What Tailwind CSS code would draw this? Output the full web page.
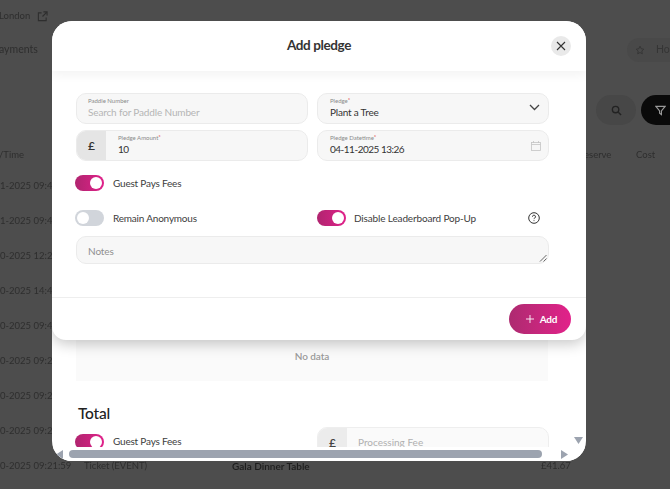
<!DOCTYPE html>
<html>
<head>
<meta charset="utf-8">
<script src="https://cdn.jsdelivr.net/npm/@tailwindcss/browser@4"></script>
</head>
<body class="m-0">
<div class="relative w-[670px] h-[489px] overflow-hidden bg-[#4d4d4d] font-['Lato','Noto_Sans',sans-serif]">
  <!-- dimmed page behind -->
  <div class="blur-[0.7px] text-[9.500px] text-[#2e2e2e] w-[670px] h-[489px]">
    <div class="flex items-center gap-[7px] h-[32px]">
      <span class="-ml-[1px]">London</span>
      <svg class="w-[11px] h-[11px]" viewBox="0 0 12 12" fill="none" stroke="#2e2e2e" stroke-width="1.2"><path d="M5 2H1.500v8.500H10V7M7 1h4v4M11 1 6 6"/></svg>
    </div>
    <div class="flex items-center justify-between h-[36px]">
      <span class="-ml-[1px] text-[10.500px]">ayments</span>
      <div class="flex items-center gap-[11px] w-[43px] h-[24px] pl-[8px] rounded-l-full bg-[#494949] text-[#353535] overflow-hidden">
        <svg class="w-[10px] h-[10px] shrink-0" viewBox="0 0 24 24" fill="none" stroke="#333" stroke-width="2"><path d="m12 3 3 6 6 1-4.500 4.500 1 6.500-5.500-3-5.500 3 1-6.500L3 10l6-1z"/></svg>
        <span class="text-[10.500px]">Hom</span>
      </div>
    </div>
    <div class="flex justify-end gap-[5px] h-[59px] pt-[27px]">
      <div class="w-[40px] h-[30px] rounded-full bg-[#474747] flex items-center justify-center">
        <svg class="w-[11px] h-[11px]" viewBox="0 0 24 24" fill="none" stroke="#222" stroke-width="3"><circle cx="10" cy="10" r="7"/><path d="m16 16 6 6"/></svg>
      </div>
      <div class="w-[29px] h-[30px] rounded-l-full bg-[#0a0a0a] flex items-center pl-[14px]">
        <svg class="w-[11px] h-[11px]" viewBox="0 0 24 24" fill="none" stroke="#999" stroke-width="2.500"><path d="M2 3h20l-8 10v8l-4-3v-5z"/></svg>
      </div>
    </div>
    <div class="flex items-center h-[27px] mt-[15px]">
      <span class="w-[585px] -ml-[1px]">/Time</span><span class="w-[52px]">eserve</span><span>Cost</span>
    </div>
    <div class="flex flex-col">
      <div class="h-[35px] flex items-center">1-2025 09:49</div>
      <div class="h-[35px] flex items-center">1-2025 09:49</div>
      <div class="h-[35px] flex items-center">0-2025 12:26</div>
      <div class="h-[35px] flex items-center">0-2025 14:46</div>
      <div class="h-[35px] flex items-center">0-2025 09:41</div>
      <div class="h-[35px] flex items-center">0-2025 09:23</div>
      <div class="h-[35px] flex items-center">0-2025 09:22</div>
      <div class="h-[35px] flex items-center">0-2025 09:22</div>
      <div class="h-[35px] flex items-center">
        <span class="w-[84px]">0-2025 09:21:59</span><span class="w-[148px]">Ticket (EVENT)</span><span class="w-[309px] text-[10px] text-[#1c1c1c] font-semibold">Gala Dinner Table</span><span>£41.67</span>
      </div>
    </div>
  </div>

  <!-- modal -->
  <div class="absolute left-[52px] top-[21px] w-[534px] h-[440px] bg-white rounded-[20px] overflow-hidden">
    <div class="relative z-10 h-[319px] bg-white rounded-b-[14px] shadow-[0_4px_14px_rgba(0,0,0,0.22)] flex flex-col">
      <div class="h-[50px] shrink-0 relative flex items-center justify-center shadow-[0_4px_10px_rgba(0,0,0,0.05)]">
        <h2 class="text-[13.500px] tracking-[-0.4px] -mt-[1px] font-bold text-[#333333]">Add pledge</h2>
        <button class="absolute right-[15px] top-[15px] w-[20px] h-[20px] rounded-full bg-[#e9e9e9] flex items-center justify-center">
          <svg class="w-[10px] h-[10px]" viewBox="0 0 10 10" fill="none" stroke="#333" stroke-width="1.100"><path d="m1 1 8 8M9 1l-8 8"/></svg>
        </button>
      </div>
      <div class="h-[226px] shrink-0 pt-[22px] pl-[24px] flex flex-col">
        <div class="grid grid-cols-[232px_232px] gap-x-[9px] gap-y-[6px]">
          <div class="h-[31px] rounded-[10px] border border-[#ebebeb] bg-[#f7f7f7] pl-[11px] flex flex-col">
            <span class="text-[6px] leading-[7px] mt-[3px] text-[#8a8a8a]">Paddle Number</span>
            <span class="text-[10px] tracking-[-0.15px] leading-[12px] mt-[2px] text-[#b5b5b5]">Search for Paddle Number</span>
          </div>
          <div class="relative h-[31px] rounded-[10px] border border-[#ebebeb] bg-[#f7f7f7] pl-[12px] flex flex-col">
            <span class="text-[6px] leading-[7px] mt-[3px] text-[#8a8a8a]">Pledge<sup class="text-[#e02424] text-[6px] top-[-1px]">*</sup></span>
            <span class="text-[10px] tracking-[-0.2px] leading-[12px] mt-[2px] text-[#333]">Plant a Tree</span>
            <svg class="absolute right-[8px] top-[10px] w-[11px] h-[7px]" viewBox="0 0 11 7" fill="none" stroke="#444" stroke-width="1.300"><path d="m1 1 4.500 4.500L10 1"/></svg>
          </div>
          <div class="h-[31px] rounded-[10px] border border-[#ebebeb] bg-[#f7f7f7] overflow-hidden flex">
            <div class="w-[29px] bg-[#e5e5e5] flex items-center justify-center text-[12px] font-semibold text-[#333]">£</div>
            <div class="pl-[12px] flex flex-col">
              <span class="text-[6px] leading-[7px] mt-[3px] text-[#8a8a8a]">Pledge Amount<sup class="text-[#e02424] text-[6px] top-[-1px]">*</sup></span>
              <span class="text-[10px] tracking-[-0.5px] leading-[12px] mt-[2px] text-[#333]">10</span>
            </div>
          </div>
          <div class="relative h-[31px] rounded-[10px] border border-[#ebebeb] bg-[#f7f7f7] pl-[12px] flex flex-col">
            <span class="text-[6px] leading-[7px] mt-[3px] text-[#8a8a8a]">Pledge Datetime<sup class="text-[#e02424] text-[6px] top-[-1px]">*</sup></span>
            <span class="text-[10px] tracking-[-0.5px] leading-[12px] mt-[2px] text-[#333]">04-11-2025 13:26</span>
            <svg class="absolute right-[7px] top-[10px] w-[10px] h-[10px]" viewBox="0 0 10 10" fill="none" stroke="#c4c4c4" stroke-width="0.800"><rect x="0.500" y="1.500" width="9" height="8"/><path d="M0.500 3.500h9M2.500 0v2M7.500 0v2"/></svg>
          </div>
        </div>
        <div class="flex items-center gap-[9px] mt-[13px] h-[18px] -ml-[1px]">
          <span class="w-[29px] h-[16px] rounded-full bg-linear-to-r from-[#b0246f] to-[#e0218a] relative"><span class="absolute right-[2px] top-[2px] w-[12px] h-[12px] rounded-full bg-white"></span></span>
          <span class="text-[10px] tracking-[-0.2px] text-[#3d3d3d]">Guest Pays Fees</span>
        </div>
        <div class="grid grid-cols-[232px_232px] gap-x-[9px] mt-[17px] h-[18px]">
          <div class="flex items-center gap-[9px] -ml-[1px]">
            <span class="w-[29px] h-[16px] rounded-full bg-[#d1d5db] relative"><span class="absolute left-[2px] top-[2px] w-[12px] h-[12px] rounded-full bg-white"></span></span>
            <span class="text-[10px] tracking-[-0.2px] text-[#3d3d3d]">Remain Anonymous</span>
          </div>
          <div class="flex items-center gap-[8px]">
            <span class="w-[29px] h-[16px] rounded-full bg-linear-to-r from-[#b0246f] to-[#e0218a] relative"><span class="absolute right-[2px] top-[2px] w-[12px] h-[12px] rounded-full bg-white"></span></span>
            <span class="text-[10px] tracking-[-0.15px] text-[#3d3d3d]">Disable Leaderboard Pop-Up</span>
            <svg class="ml-auto mr-[9px] w-[12px] h-[12px]" viewBox="0 0 12 12" fill="none" stroke="#333" stroke-width="1"><circle cx="6" cy="6" r="5.300"/><path d="M4.500 4.700a1.500 1.500 0 1 1 2.200 1.300c-.5.300-.7.600-.7 1.100"/><path d="M6 8.300v.8"/></svg>
          </div>
        </div>
        <div class="relative mt-[9px] h-[28px] w-[473px] rounded-[10px] border border-[#ebebeb] bg-[#f7f7f7] pl-[11px] pt-[3px] flex items-center text-[10px] tracking-[-0.1px] text-[#8f8f8f]">
          Notes
          <svg class="absolute right-[1px] bottom-[1px] w-[8px] h-[8px]" viewBox="0 0 8 8" fill="none" stroke="#444" stroke-width="0.800"><path d="M1 7.500 7.500 1M4.500 7.500l3-3"/></svg>
        </div>
      </div>
      <div class="flex-1 border-t border-[#eeeeee] flex items-start justify-end pt-[6px] pr-[15px]">
        <button class="w-[62px] h-[30px] rounded-full bg-linear-to-r from-[#ad2a70] to-[#e2218a] text-white flex items-center justify-center gap-[6px] pl-[3px] text-[10px] tracking-[-0.2px] font-bold">
          <svg class="w-[8px] h-[8px]" viewBox="0 0 9 9" fill="none" stroke="#fff" stroke-width="1"><path d="M4.500 0v9M0 4.500h9"/></svg>
          Add
        </button>
      </div>
    </div>
    <div class="ml-[24px] w-[472px] h-[41px] bg-[#fafafa] flex items-center justify-center pb-[8px] text-[10px] tracking-[-0.1px] font-semibold text-[#9a9a9a]">No data</div>
    <div class="pl-[26px] mt-[22px] text-[15.500px] tracking-[-0.2px] leading-[20px] font-medium text-[#222]">Total</div>
    <div class="grid grid-cols-[232px_232px] gap-x-[9px] pl-[24px] mt-[4px] h-[31px]">
      <div class="flex items-start gap-[9px] pt-[7px] -ml-[1px]">
        <span class="w-[29px] h-[16px] shrink-0 rounded-full bg-linear-to-r from-[#b0246f] to-[#e0218a] relative"><span class="absolute right-[2px] top-[2px] w-[12px] h-[12px] rounded-full bg-white"></span></span>
        <span class="text-[10px] tracking-[-0.2px] leading-[15px] text-[#3d3d3d]">Guest Pays Fees</span>
      </div>
      <div class="h-[31px] rounded-[10px] border border-[#eeeeee] bg-[#fafafa] overflow-hidden flex">
        <div class="w-[29px] bg-[#ececec] flex items-center justify-center text-[12px] font-semibold text-[#444]">£</div>
        <span class="pl-[11px] pt-[8px] text-[10px] leading-[12px] text-[#b0b0b0]">Processing Fee</span>
      </div>
    </div>
    <!-- scrollbars lie over the modal's content -->
    <div class="absolute left-0 right-0 bottom-0 h-[14px] bg-white flex items-center">
      <svg class="ml-[4px] w-[7px] h-[9px]" viewBox="0 0 7 9"><path d="M7 0v9L0 4.500z" fill="#9ca3af"/></svg>
      <div class="ml-[6px] w-[473px] h-[8px] rounded-full bg-[#9ca3af]"></div>
      <svg class="ml-[19px] w-[7px] h-[9px]" viewBox="0 0 7 9"><path d="M0 0v9l7-4.500z" fill="#9ca3af"/></svg>
    </div>
    <svg class="absolute right-[3px] bottom-[17px] w-[9px] h-[7px]" viewBox="0 0 9 7"><path d="M0 0h9L4.500 7z" fill="#9ca3af"/></svg>
  </div>
</div>
</body>
</html>
